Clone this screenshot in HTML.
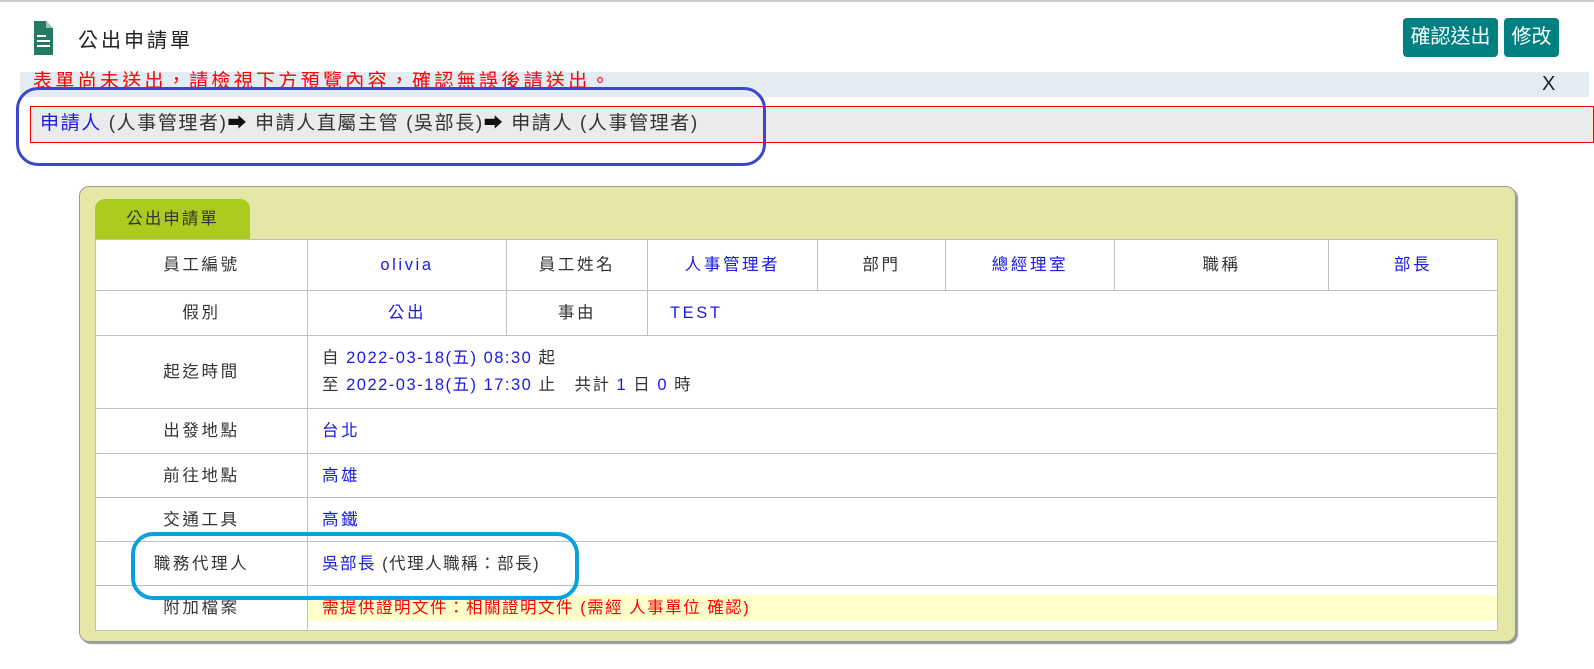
<!DOCTYPE html>
<html><head><meta charset="utf-8"><style>
*{margin:0;padding:0;box-sizing:border-box}
body{width:1594px;height:669px;background:#fff;position:relative;overflow:hidden;font-family:"Liberation Sans","Noto Sans CJK TC",sans-serif;color:#333}
.abs{position:absolute}
.btn{position:absolute;background:#008080;color:#fff;border-radius:4px;font-size:20px;text-align:center;line-height:39px;top:18px;height:39px}
table{border-collapse:collapse;position:absolute;left:95px;top:239px;width:1403px;background:#fff;font-size:16.5px;letter-spacing:1.5px}
td{border:1px solid #c0c0c0;text-align:center;color:#333;vertical-align:middle;line-height:20px}
.lb{letter-spacing:2.6px}
.b{color:#1a1ae6}
.l{text-align:left;padding-left:14px}
</style></head><body>
<div class="abs" style="left:0;top:0;width:1594px;height:2px;background:#ccc"></div>
<svg class="abs" style="left:34px;top:21px" width="19" height="34" viewBox="0 0 19 34"><path d="M0 0H12L19 7V34H0Z" fill="#257a64"/><path d="M12 0V7H19" fill="#9fc4b8"/><rect x="3" y="14" width="9" height="2" fill="#fff"/><rect x="3" y="19" width="13" height="2" fill="#fff"/><rect x="3" y="24" width="13" height="2" fill="#fff"/></svg>
<div class="abs" style="left:78px;top:24px;font-size:20px;letter-spacing:3px;color:#222">公出申請單</div>
<div class="btn" style="left:1403px;width:95px">確認送出</div>
<div class="btn" style="left:1504px;width:55px">修改</div>
<div class="abs" style="left:20px;top:72px;width:1569px;height:25px;background:#e3ebf3"></div>
<div class="abs" style="left:33px;top:70px;font-size:19px;letter-spacing:3.3px;color:#f00;line-height:24px;height:22px;overflow:hidden">表單尚未送出，請檢視下方預覽內容，確認無誤後請送出。</div>
<div class="abs" style="left:1542px;top:73px;font-size:20px;color:#222">X</div>
<div class="abs" style="left:30px;top:106px;width:1564px;height:37px;background:#ebebeb;border:1px solid #f00;font-size:19px;letter-spacing:1.6px;line-height:34px;padding-left:9px;color:#333">
<span style="color:#1a1ae6">申請人</span> (人事管理者)<b style="color:#111">➡</b> 申請人直屬主管 (吳部長)<b style="color:#111">➡</b> 申請人 (人事管理者)</div>
<div class="abs" style="left:16px;top:87px;width:750px;height:79px;border:3px solid #3d47c8;border-radius:22px"></div>
<div class="abs" style="left:79px;top:186px;width:1437px;height:456px;background:#e4e7a6;border:1px solid #999;border-radius:10px;box-shadow:2px 2px 1px #999"></div>
<div class="abs" style="left:95px;top:199px;width:155px;height:40px;background:#a9cc1f;border-radius:10px 10px 0 0;font-size:16.5px;letter-spacing:2px;text-align:center;line-height:40px;color:#333">公出申請單</div>
<table>
<colgroup><col style="width:212px"><col style="width:199px"><col style="width:141px"><col style="width:170px"><col style="width:128px"><col style="width:169px"><col style="width:214px"><col></colgroup>
<tr style="height:51px"><td class="lb">員工編號</td><td class="b lb">olivia</td><td class="lb">員工姓名</td><td class="b lb">人事管理者</td><td class="lb">部門</td><td class="b lb">總經理室</td><td class="lb">職稱</td><td class="b lb">部長</td></tr>
<tr style="height:45px"><td class="lb">假別</td><td class="b lb">公出</td><td class="lb">事由</td><td class="b l lb" colspan="5" style="padding-left:22px">TEST</td></tr>
<tr style="height:73px"><td class="lb">起迄時間</td><td colspan="7" class="l" style="line-height:27px">自 <span class="b">2022-03-18(五) 08:30</span> 起<br>至 <span class="b">2022-03-18(五) 17:30</span> 止　共計 <span class="b">1</span> 日 <span class="b">0</span> 時</td></tr>
<tr style="height:45px"><td class="lb">出發地點</td><td colspan="7" class="l b lb">台北</td></tr>
<tr style="height:44px"><td class="lb">前往地點</td><td colspan="7" class="l b lb">高雄</td></tr>
<tr style="height:44px"><td class="lb">交通工具</td><td colspan="7" class="l b lb">高鐵</td></tr>
<tr style="height:44px"><td class="lb">職務代理人</td><td colspan="7" class="l"><span class="b">吳部長</span> (代理人職稱：部長)</td></tr>
<tr style="height:45px"><td class="lb">附加檔案</td><td colspan="7" style="text-align:left;padding:0 0 8px 0;vertical-align:top"><div style="background:#ffffcc;color:#f00;margin-top:9px;padding-left:14px;line-height:26px">需提供證明文件：相關證明文件 (需經 人事單位 確認)</div></td></tr>
</table>
<div class="abs" style="left:131px;top:532px;width:448px;height:68px;border:4px solid #0aa0e0;border-radius:22px"></div>
</body></html>
